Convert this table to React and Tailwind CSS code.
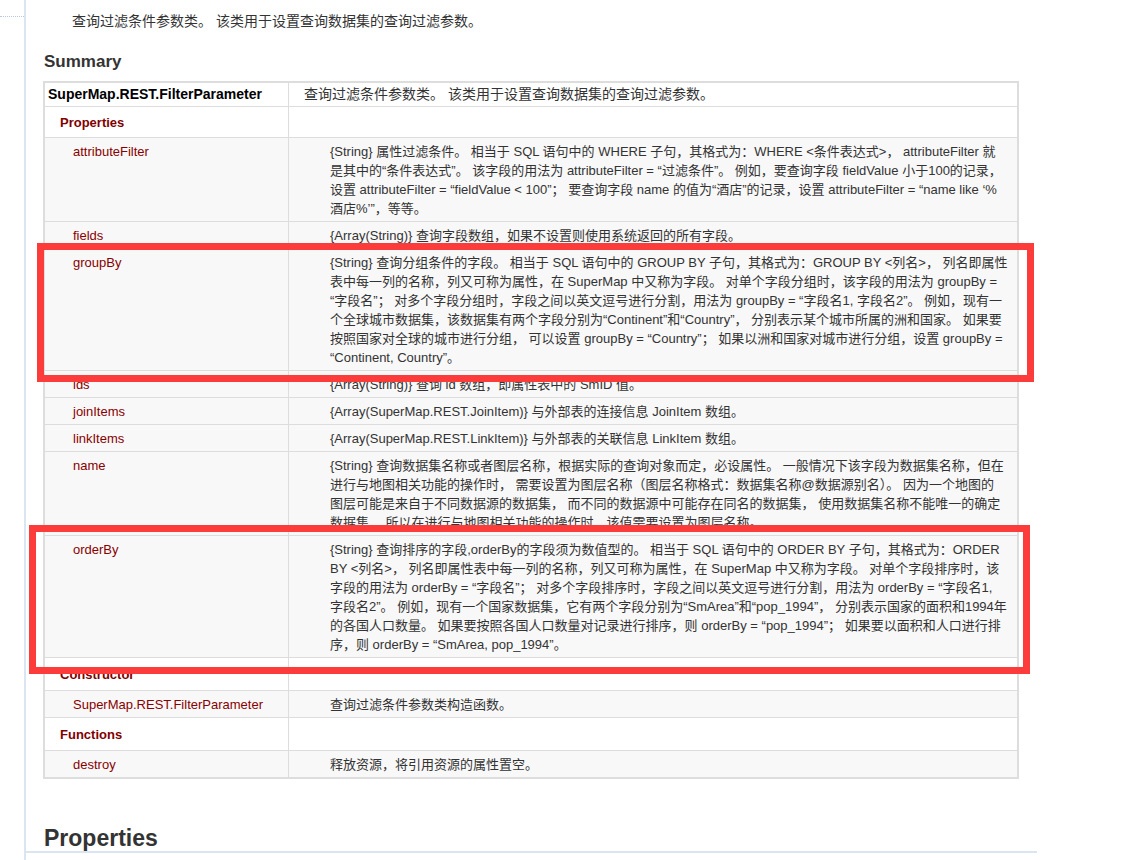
const rows = [
  { type: "section", label: "Properties", pad: "pt-[6px] pb-[5px]" },
  {
    type: "item",
    name: "attributeFilter",
    lines: [
      "{String} 属性过滤条件。 相当于 SQL 语句中的 WHERE 子句，其格式为：WHERE <条件表达式>， attributeFilter 就",
      "是其中的“条件表达式”。 该字段的用法为 attributeFilter = “过滤条件”。 例如，要查询字段 fieldValue 小于100的记录，",
      "设置 attributeFilter = “fieldValue < 100”； 要查询字段 name 的值为“酒店”的记录，设置 attributeFilter = “name like ‘%",
      "酒店%’”，等等。",
    ],
  },
  {
    type: "item",
    name: "fields",
    lines: ["{Array(String)} 查询字段数组，如果不设置则使用系统返回的所有字段。"],
  },
  {
    type: "item",
    name: "groupBy",
    lines: [
      "{String} 查询分组条件的字段。 相当于 SQL 语句中的 GROUP BY 子句，其格式为：GROUP BY <列名>， 列名即属性",
      "表中每一列的名称，列又可称为属性，在 SuperMap 中又称为字段。 对单个字段分组时，该字段的用法为 groupBy =",
      "“字段名”； 对多个字段分组时，字段之间以英文逗号进行分割，用法为 groupBy = “字段名1, 字段名2”。 例如，现有一",
      "个全球城市数据集，该数据集有两个字段分别为“Continent”和“Country”， 分别表示某个城市所属的洲和国家。 如果要",
      "按照国家对全球的城市进行分组， 可以设置 groupBy = “Country”； 如果以洲和国家对城市进行分组，设置 groupBy =",
      "“Continent, Country”。",
    ],
  },
  {
    type: "item",
    name: "ids",
    lines: ["{Array(String)} 查询 id 数组，即属性表中的 SmID 值。"],
  },
  {
    type: "item",
    name: "joinItems",
    lines: ["{Array(SuperMap.REST.JoinItem)} 与外部表的连接信息 JoinItem 数组。"],
  },
  {
    type: "item",
    name: "linkItems",
    lines: ["{Array(SuperMap.REST.LinkItem)} 与外部表的关联信息 LinkItem 数组。"],
  },
  {
    type: "item",
    name: "name",
    lines: [
      "{String} 查询数据集名称或者图层名称，根据实际的查询对象而定，必设属性。 一般情况下该字段为数据集名称，但在",
      "进行与地图相关功能的操作时， 需要设置为图层名称（图层名称格式：数据集名称@数据源别名）。 因为一个地图的",
      "图层可能是来自于不同数据源的数据集， 而不同的数据源中可能存在同名的数据集， 使用数据集名称不能唯一的确定",
      "数据集， 所以在进行与地图相关功能的操作时，该值需要设置为图层名称。",
    ],
  },
  {
    type: "item",
    name: "orderBy",
    lines: [
      "{String} 查询排序的字段,orderBy的字段须为数值型的。 相当于 SQL 语句中的 ORDER BY 子句，其格式为：ORDER",
      "BY <列名>， 列名即属性表中每一列的名称，列又可称为属性，在 SuperMap 中又称为字段。 对单个字段排序时，该",
      "字段的用法为 orderBy = “字段名”； 对多个字段排序时，字段之间以英文逗号进行分割，用法为 orderBy = “字段名1,",
      "字段名2”。 例如，现有一个国家数据集，它有两个字段分别为“SmArea”和“pop_1994”， 分别表示国家的面积和1994年",
      "的各国人口数量。 如果要按照各国人口数量对记录进行排序，则 orderBy = “pop_1994”； 如果要以面积和人口进行排",
      "序，则 orderBy = “SmArea, pop_1994”。",
    ],
  },
  { type: "section", label: "Constructor", pad: "pt-[7px] pb-[6px]" },
  {
    type: "item",
    name: "SuperMap.REST.FilterParameter",
    lines: ["查询过滤条件参数类构造函数。"],
  },
  { type: "section", label: "Functions", pad: "pt-[7px] pb-[6px]" },
  {
    type: "item",
    name: "destroy",
    lines: ["释放资源，将引用资源的属性置空。"],
  },
];

function SummaryRow({ row }) {
  if (row.type === "section") {
    return (
      <tr className="bg-white">
        <td className={"border border-[#dddddd] pl-[15px] align-top text-[13px] font-bold text-[#800000] " + row.pad}>
          <div className="h-[19px] leading-[19px]">{row.label}</div>
        </td>
        <td className="border border-[#dddddd]" />
      </tr>
    );
  }
  return (
    <tr className="bg-[#f8f8f8]">
      <td className="border border-[#dddddd] pl-[28px] pt-[4px] pb-[3px] align-top text-[13px] text-[#880000]">
        <div className="h-[19px] leading-[19px] whitespace-nowrap">{row.name}</div>
      </td>
      <td className="border border-[#dddddd] pl-[41px] pt-[4px] pb-[3px] align-top text-[13px] text-[#333333]">
        {row.lines.map((line, i) => (
          <div key={i} className="h-[19px] leading-[19px] whitespace-pre">
            {line}
          </div>
        ))}
      </td>
    </tr>
  );
}

// annotation boxes drawn over the screenshot
function Highlight({ className }) {
  return <div className={"absolute border-[7px] border-[#fc3b3b] pointer-events-none " + className} />;
}

export default function App() {
  return (
    <div className="relative w-[1130px] h-[860px] overflow-hidden bg-white font-['Liberation_Sans','Noto_Sans_CJK_SC',sans-serif] text-[#333333]">
      <div className="flex h-full">
        <div className="w-[24px] shrink-0">
          <div className="mt-[16px] border-t border-dotted border-[#b9c9dc]" />
        </div>

        <div className="w-[1013px] h-full border-l-2 border-[#dbe5f1] flex flex-col">
          <p className="pl-[46px] pt-[11px] h-[31px] text-[14px] leading-[20px] text-[#333333] whitespace-pre">
            查询过滤条件参数类。 该类用于设置查询数据集的查询过滤参数。
          </p>

          <h2 className="pl-[18px] mt-[20px] h-[22px] text-[17px] leading-[22px] font-bold text-[#333333]">Summary</h2>

          <div className="ml-[17px] mt-[8px] w-[976px] border border-[#dddddd]">
            <table className="w-full table-fixed border-collapse">
              <colgroup>
                <col className="w-[244px]" />
                <col />
              </colgroup>
              <tbody>
                <tr className="bg-white">
                  <td className="border border-[#dddddd] pl-[3px] pt-[2px] pb-[2px] text-[14px] font-bold text-black">
                    <div className="h-[19px] leading-[19px] whitespace-nowrap">SuperMap.REST.FilterParameter</div>
                  </td>
                  <td className="border border-[#dddddd] pl-[15px] pt-[2px] pb-[2px] text-[14px] text-[#333333]">
                    <div className="h-[19px] leading-[19px] whitespace-pre">
                      查询过滤条件参数类。 该类用于设置查询数据集的查询过滤参数。
                    </div>
                  </td>
                </tr>
                {rows.map((row, i) => (
                  <SummaryRow key={i} row={row} />
                ))}
              </tbody>
            </table>
          </div>

          <h2 className="mt-[45px] pl-[18px] h-[29px] border-b-2 border-[#dbe5f1] text-[23px] leading-[28px] font-bold text-[#333333]">
            Properties
          </h2>
        </div>
      </div>

      <Highlight className="left-[37px] top-[243px] w-[997px] h-[139px]" />
      <Highlight className="left-[29px] top-[525px] w-[1001px] h-[149px]" />
    </div>
  );
}
